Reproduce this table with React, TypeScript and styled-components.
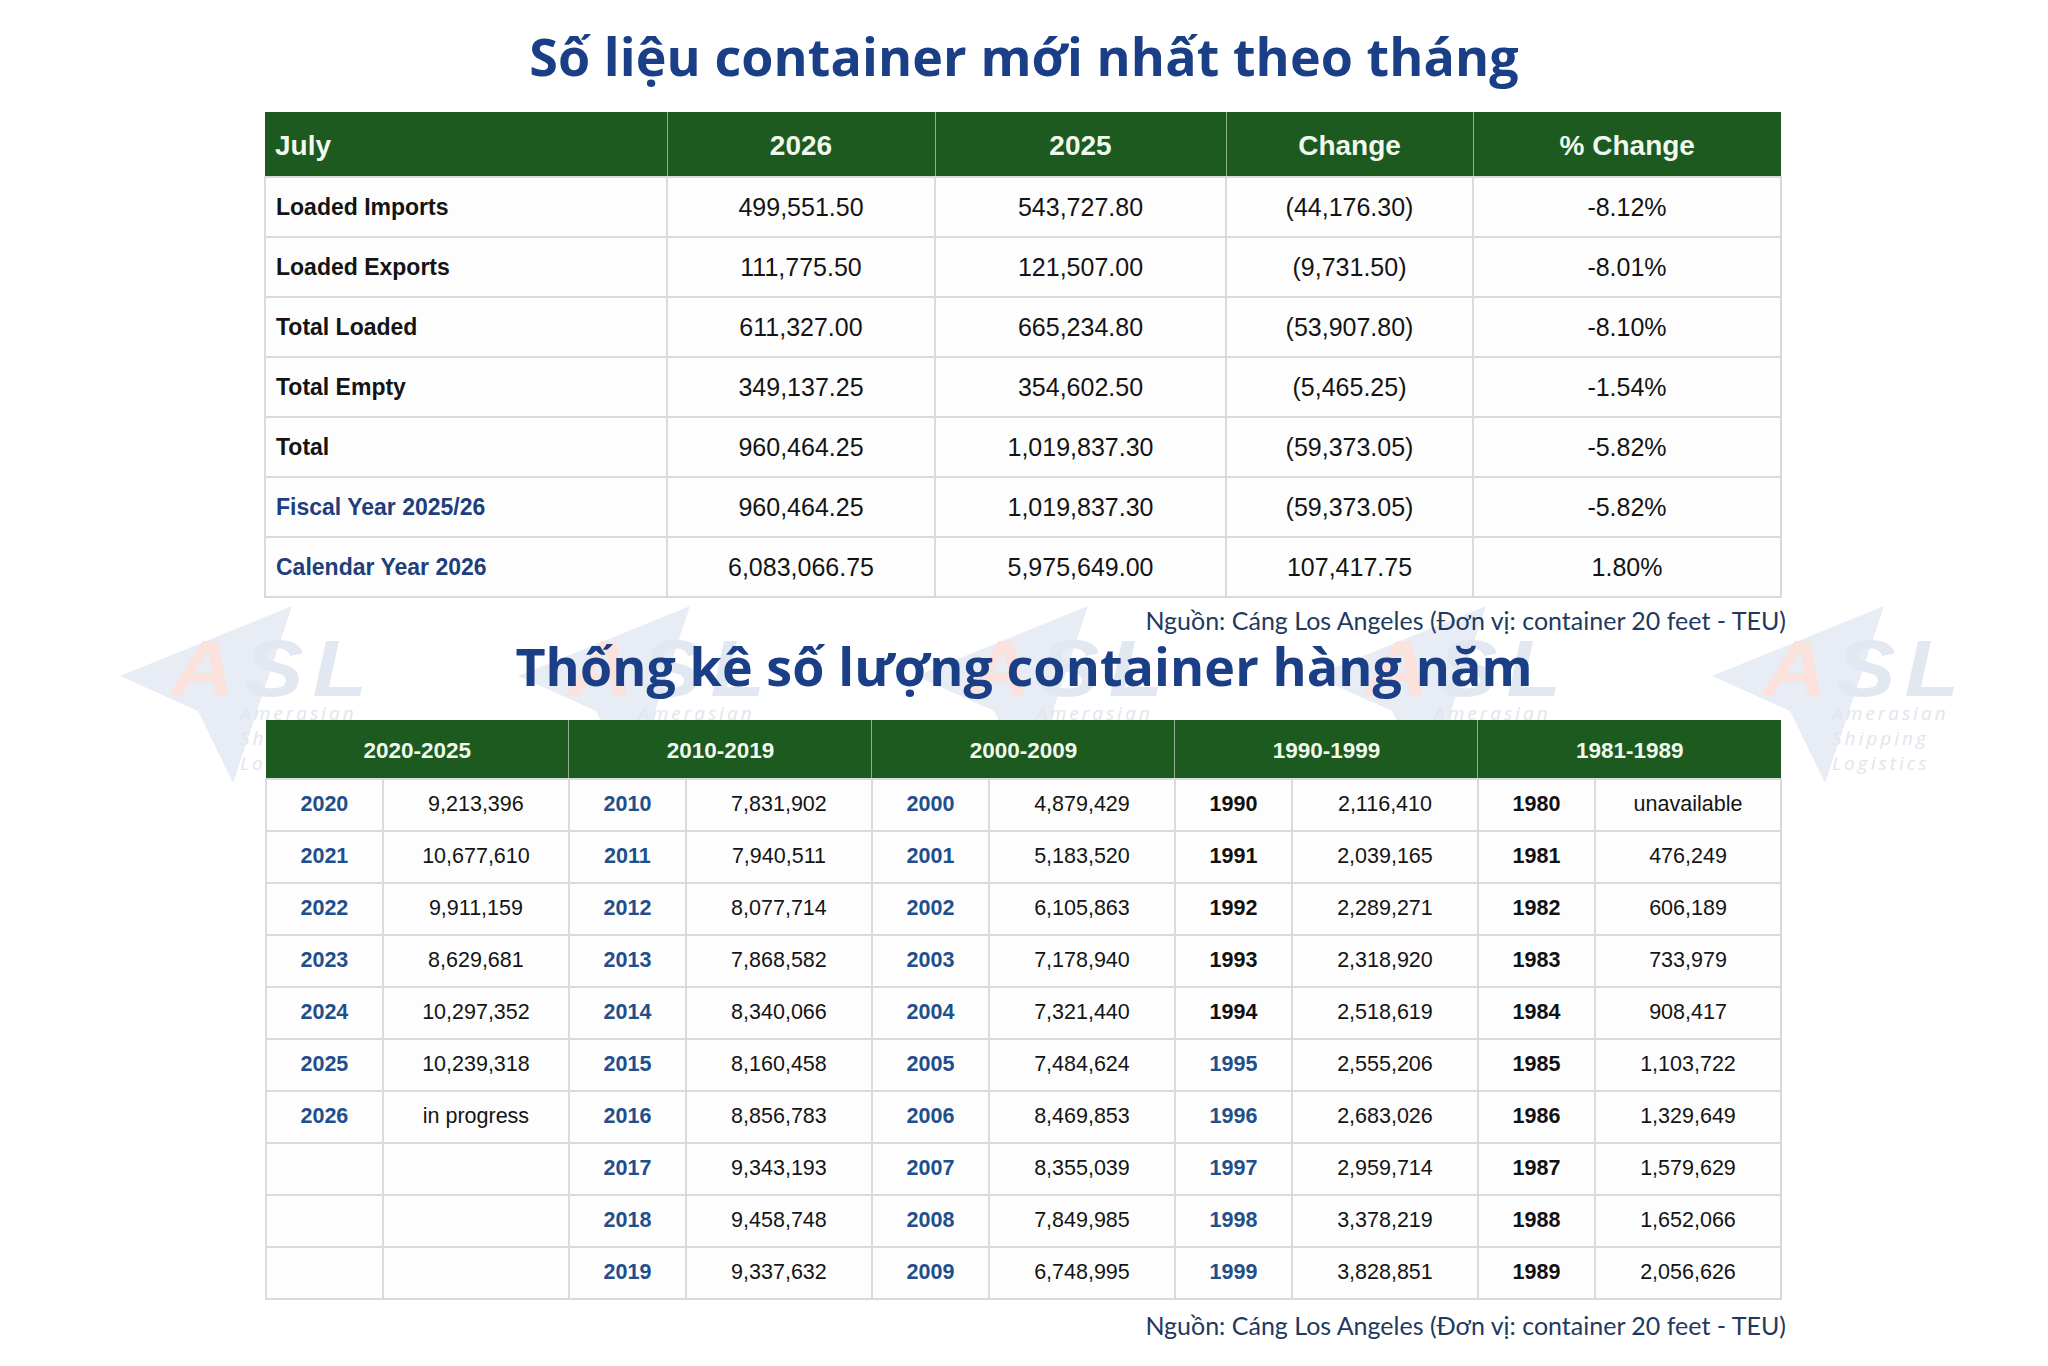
import React from "react";
import styled, { createGlobalStyle } from "styled-components";

const GlobalStyle = createGlobalStyle`
   html, body {
      margin: 0;
      padding: 0;
      background: #ffffff;
   }
`;

const TITLE_BLUE = "#1b3f86";
const YEAR_BLUE = "#1f4f8c";
const HEAD_GREEN = "#1c5a1f";
const LINE = "#dadada";

const Page = styled.div`
   position: relative;
   width: 2048px;
   height: 1366px;
   overflow: hidden;
   display: flex;
   flex-direction: column;
   align-items: center;
   background: #ffffff;
`;

const Title = styled.h1<{ top: number }>`
   position: relative;
   z-index: 1;
   margin: ${({ top }) => top}px 0 0;
   font-family: "Open Sans", Lato, sans-serif;
   font-weight: 700;
   font-size: 52px;
   line-height: 1.2;
   color: ${TITLE_BLUE};
   letter-spacing: 0.1px;
`;

const Section = styled.section<{ top: number }>`
   position: relative;
   z-index: 1;
   width: 1516px;
   margin-top: ${({ top }) => top}px;
   display: flex;
   flex-direction: column;
   align-items: flex-end;
`;

const Source = styled.div<{ top: number }>`
   margin-top: ${({ top }) => top}px;
   margin-right: -4px;
   font-family: Lato, "Open Sans", sans-serif;
   font-size: 25px;
   line-height: 1.16;
   color: #1f3a5e;
`;

const Table = styled.table`
   width: 100%;
   border-collapse: collapse;
   table-layout: fixed;
   font-family: "Liberation Sans", Arial, sans-serif;
   color: #141414;
   background: #fdfdfd;
`;

const HeadCell = styled.th<{ align?: string; size: number }>`
   background: ${HEAD_GREEN};
   color: #f1f8ec;
   font-weight: 700;
   font-size: ${({ size }) => size}px;
   text-align: ${({ align }) => align || "center"};
   padding: 4px 10px 0;
   border-left: 1px solid #8fae8f;
   &:first-child {
      border-left: none;
   }
`;

const BodyCell = styled.td<{ align?: string; bold?: boolean; tone?: string; size: number }>`
   border: 2px solid ${LINE};
   padding: 0 10px;
   font-size: ${({ size }) => size}px;
   line-height: 1.2;
   font-weight: ${({ bold }) => (bold ? 700 : 400)};
   text-align: ${({ align }) => align || "center"};
   color: ${({ tone }) => tone || "#141414"};
   white-space: nowrap;
`;

const Row = styled.tr<{ h: number }>`
   height: ${({ h }) => h}px;
`;

const Mark = styled.div`
   position: absolute;
   z-index: 0;
   top: 593px;
   width: 300px;
   height: 190px;
   pointer-events: none;
`;

const MarkLetters = styled.div`
   position: absolute;
   left: 80px;
   top: 36px;
   font-family: "Liberation Sans", Arial, sans-serif;
   font-style: italic;
   font-weight: 900;
   font-size: 80px;
   line-height: 1;
   letter-spacing: 8px;
   transform: scaleX(1.12);
   transform-origin: left center;
   color: #e2e8f2;
   span {
      color: #fce2dc;
   }
`;

const MarkWords = styled.div`
   position: absolute;
   left: 150px;
   top: 108px;
   font-family: "Open Sans", sans-serif;
   font-style: italic;
   font-size: 19px;
   line-height: 25px;
   letter-spacing: 3px;
   color: #e1e5ed;
`;

const Watermark: React.FC<{ left: number }> = ({ left }) => (
   <Mark style={{ left }}>
      <svg width="300" height="190" viewBox="0 0 300 190">
         <path d="M30 83 L202 13 L143 190 L108 118 Z" fill="#e8ecf4" />
      </svg>
      <MarkLetters>
         <span>A</span>SL
      </MarkLetters>
      <MarkWords>
         Amerasian
         <br />
         Shipping
         <br />
         Logistics
      </MarkWords>
   </Mark>
);

const monthly = [
   { name: "Loaded Imports", v: ["499,551.50", "543,727.80", "(44,176.30)", "-8.12%"] },
   { name: "Loaded Exports", v: ["111,775.50", "121,507.00", "(9,731.50)", "-8.01%"] },
   { name: "Total Loaded", v: ["611,327.00", "665,234.80", "(53,907.80)", "-8.10%"] },
   { name: "Total Empty", v: ["349,137.25", "354,602.50", "(5,465.25)", "-1.54%"] },
   { name: "Total", v: ["960,464.25", "1,019,837.30", "(59,373.05)", "-5.82%"] },
   { name: "Fiscal Year 2025/26", v: ["960,464.25", "1,019,837.30", "(59,373.05)", "-5.82%"], blue: true },
   { name: "Calendar Year 2026", v: ["6,083,066.75", "5,975,649.00", "107,417.75", "1.80%"], blue: true },
];

type Entry = [string, string, boolean] | null;

const decades: { label: string; rows: Entry[] }[] = [
   {
      label: "2020-2025",
      rows: [
         ["2020", "9,213,396", true],
         ["2021", "10,677,610", true],
         ["2022", "9,911,159", true],
         ["2023", "8,629,681", true],
         ["2024", "10,297,352", true],
         ["2025", "10,239,318", true],
         ["2026", "in progress", true],
         null,
         null,
         null,
      ],
   },
   {
      label: "2010-2019",
      rows: [
         ["2010", "7,831,902", true],
         ["2011", "7,940,511", true],
         ["2012", "8,077,714", true],
         ["2013", "7,868,582", true],
         ["2014", "8,340,066", true],
         ["2015", "8,160,458", true],
         ["2016", "8,856,783", true],
         ["2017", "9,343,193", true],
         ["2018", "9,458,748", true],
         ["2019", "9,337,632", true],
      ],
   },
   {
      label: "2000-2009",
      rows: [
         ["2000", "4,879,429", true],
         ["2001", "5,183,520", true],
         ["2002", "6,105,863", true],
         ["2003", "7,178,940", true],
         ["2004", "7,321,440", true],
         ["2005", "7,484,624", true],
         ["2006", "8,469,853", true],
         ["2007", "8,355,039", true],
         ["2008", "7,849,985", true],
         ["2009", "6,748,995", true],
      ],
   },
   {
      label: "1990-1999",
      rows: [
         ["1990", "2,116,410", false],
         ["1991", "2,039,165", false],
         ["1992", "2,289,271", false],
         ["1993", "2,318,920", false],
         ["1994", "2,518,619", false],
         ["1995", "2,555,206", true],
         ["1996", "2,683,026", true],
         ["1997", "2,959,714", true],
         ["1998", "3,378,219", true],
         ["1999", "3,828,851", true],
      ],
   },
   {
      label: "1981-1989",
      rows: [
         ["1980", "unavailable", false],
         ["1981", "476,249", false],
         ["1982", "606,189", false],
         ["1983", "733,979", false],
         ["1984", "908,417", false],
         ["1985", "1,103,722", false],
         ["1986", "1,329,649", false],
         ["1987", "1,579,629", false],
         ["1988", "1,652,066", false],
         ["1989", "2,056,626", false],
      ],
   },
];

const MonthlyTable: React.FC = () => (
   <Table>
      <colgroup>
         <col style={{ width: 402 }} />
         <col style={{ width: 268 }} />
         <col style={{ width: 291 }} />
         <col style={{ width: 247 }} />
         <col style={{ width: 308 }} />
      </colgroup>
      <thead>
         <Row h={65}>
            <HeadCell size={28} align="left">July</HeadCell>
            <HeadCell size={28}>2026</HeadCell>
            <HeadCell size={28}>2025</HeadCell>
            <HeadCell size={28}>Change</HeadCell>
            <HeadCell size={28}>% Change</HeadCell>
         </Row>
      </thead>
      <tbody>
         {monthly.map((r) => (
            <Row h={60} key={r.name}>
               <BodyCell size={23} bold align="left" tone={r.blue ? "#1e3f7c" : undefined}>
                  {r.name}
               </BodyCell>
               {r.v.map((v, i) => (
                  <BodyCell size={25} key={i}>{v}</BodyCell>
               ))}
            </Row>
         ))}
      </tbody>
   </Table>
);

const YearlyTable: React.FC = () => (
   <Table>
      <colgroup>
         {decades.map((d) => (
            <React.Fragment key={d.label}>
               <col style={{ width: 117 }} />
               <col style={{ width: 186 }} />
            </React.Fragment>
         ))}
      </colgroup>
      <thead>
         <Row h={59}>
            {decades.map((d) => (
               <HeadCell size={22.5} colSpan={2} key={d.label}>{d.label}</HeadCell>
            ))}
         </Row>
      </thead>
      <tbody>
         {Array.from({ length: 10 }).map((_, i) => (
            <Row h={52} key={i}>
               {decades.map((d) => {
                  const e = d.rows[i];
                  return (
                     <React.Fragment key={d.label}>
                        <BodyCell size={21.5} bold tone={e && e[2] ? YEAR_BLUE : "#111"}>{e ? e[0] : ""}</BodyCell>
                        <BodyCell size={21.5}>{e ? e[1] : ""}</BodyCell>
                     </React.Fragment>
                  );
               })}
            </Row>
         ))}
      </tbody>
   </Table>
);

const App: React.FC = () => (
   <>
      <GlobalStyle />
      <Page>
         {[90, 488, 886, 1284, 1682].map((x) => (
            <Watermark left={x} key={x} />
         ))}
         <Title top={25}>Số liệu container mới nhất theo tháng</Title>
         <Section top={25}>
            <MonthlyTable />
            <Source top={8}>Nguồn: Cáng Los Angeles (Đơn vị: container 20 feet - TEU)</Source>
         </Section>
         <Title top={0}>Thống kê số lượng container hàng năm</Title>
         <Section top={22}>
            <YearlyTable />
            <Source top={11}>Nguồn: Cáng Los Angeles (Đơn vị: container 20 feet - TEU)</Source>
         </Section>
      </Page>
   </>
);

export default App;
